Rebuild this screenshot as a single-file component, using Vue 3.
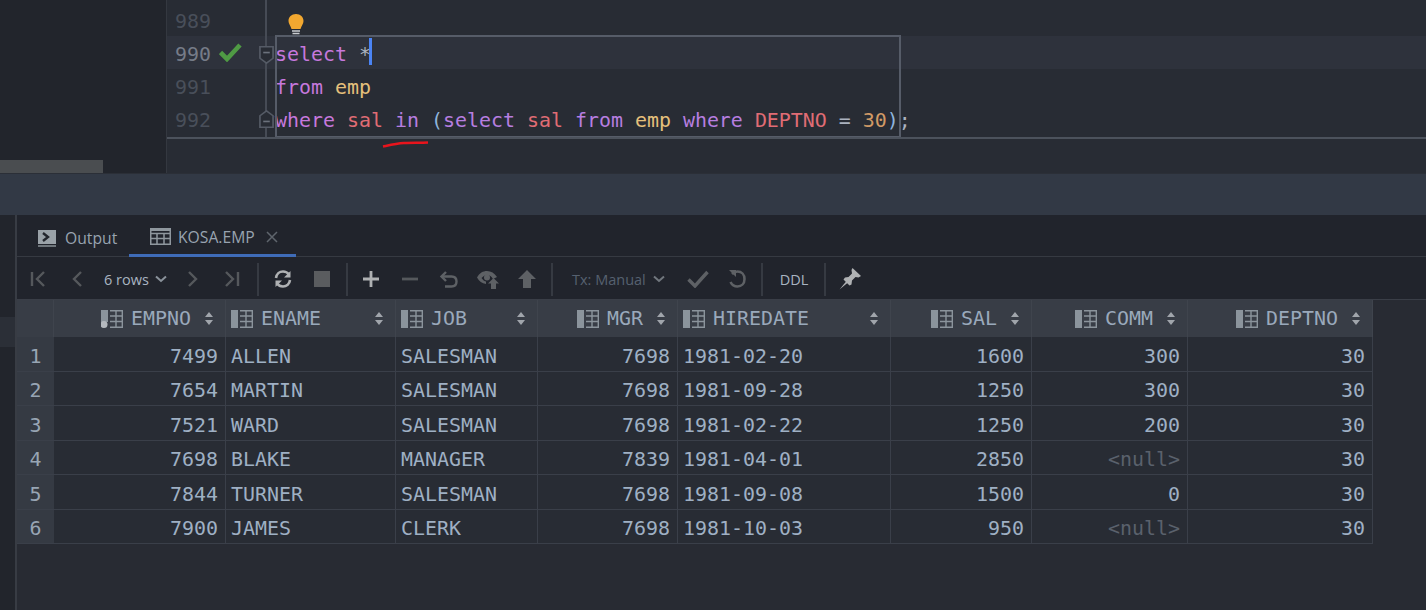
<script setup>
const columns = [
  { name: 'EMPNO', align: 'right', key: true },
  { name: 'ENAME', align: 'left' },
  { name: 'JOB', align: 'left' },
  { name: 'MGR', align: 'right' },
  { name: 'HIREDATE', align: 'left' },
  { name: 'SAL', align: 'right' },
  { name: 'COMM', align: 'right' },
  { name: 'DEPTNO', align: 'right' },
]
const rows = [
  ['7499', 'ALLEN', 'SALESMAN', '7698', '1981-02-20', '1600', '300', '30'],
  ['7654', 'MARTIN', 'SALESMAN', '7698', '1981-09-28', '1250', '300', '30'],
  ['7521', 'WARD', 'SALESMAN', '7698', '1981-02-22', '1250', '200', '30'],
  ['7698', 'BLAKE', 'MANAGER', '7839', '1981-04-01', '2850', '<null>', '30'],
  ['7844', 'TURNER', 'SALESMAN', '7698', '1981-09-08', '1500', '0', '30'],
  ['7900', 'JAMES', 'CLERK', '7698', '1981-10-03', '950', '<null>', '30'],
]
</script>

<template>
  <div class="app">
    <section class="top">
      <aside class="project">
        <div class="hscroll"></div>
      </aside>
      <div class="editor">
        <div class="line"><span class="num">989</span><span class="mark"></span><span class="fold"></span></div>
        <div class="line current">
          <span class="num cur">990</span>
          <span class="mark">
            <svg width="24" height="20" viewBox="0 0 24 20"><path d="M1.5 10.5 L8 17 L21 3" fill="none" stroke="#4f9a44" stroke-width="4.600"/></svg>
          </span>
          <span class="fold"></span>
          <code class="code"><span class="kw">select</span> <span class="op">*</span><span class="caret"></span></code>
        </div>
        <div class="line"><span class="num">991</span><span class="mark"></span><span class="fold"></span>
          <code class="code"><span class="kw">from</span> <span class="tb">emp</span></code>
        </div>
        <div class="line"><span class="num">992</span><span class="mark"></span><span class="fold"></span>
          <code class="code"><span class="kw">where</span> <span class="col">sal</span> <span class="kw2">in</span> <span class="par">(</span><span class="kw2">select</span> <span class="col">sal</span> <span class="kw2">from</span> <span class="tb">emp</span> <span class="kw2">where</span> <span class="col">DEPTNO</span> <span class="op">=</span> <span class="nm">30</span><span class="par">)</span><span class="op">;</span></code>
        </div>
        <div class="foldline"></div>
        <svg class="foldmark fm1" width="15" height="18" viewBox="0 0 16 22" preserveAspectRatio="none"><path d="M1 1 H15 V15 L8 21 L1 15 Z" fill="#282c34" stroke="#555b66" stroke-width="1.8"/><path d="M4.5 8 H11.5" stroke="#6b717c" stroke-width="2"/></svg>
        <svg class="foldmark fm2" width="15" height="18" viewBox="0 0 16 22" preserveAspectRatio="none"><path d="M1 21 H15 V7 L8 1 L1 7 Z" fill="#282c34" stroke="#555b66" stroke-width="1.8"/><path d="M4.5 14 H11.5" stroke="#6b717c" stroke-width="2"/></svg>
        <svg class="bulb" width="18" height="24" viewBox="0 0 18 24">
          <path d="M9 1 C4.5 1 1.5 4 1.5 8 C1.5 11 3.5 12.500 4.500 16 H13.500 C14.500 12.500 16.500 11 16.500 8 C16.500 4 13.500 1 9 1 Z" fill="#f2a830"/>
          <path d="M5 18 H13 M5.500 20.500 H12.500 M7 23 H11" stroke="#c9ccd0" stroke-width="1.400"/>
        </svg>
        <div class="selection"></div>
        <svg class="scribble" width="48" height="8" viewBox="0 0 48 8"><path d="M1 6.500 C8 5 14 3.500 22 3 C30 2.500 38 3 46 2.500" fill="none" stroke="#e8141c" stroke-width="2.500"/></svg>
        <div class="rule"></div>
      </div>
    </section>

    <div class="band"></div>

    <section class="bottom">
      <aside class="rail"><div class="rail-mark"></div></aside>
      <div class="results">
        <nav class="tabs">
          <div class="tab tab-output">
            <svg width="18" height="17" viewBox="0 0 18 17"><rect width="18" height="14" fill="#9aa2a8"/><rect y="15" width="18" height="2" fill="#6f767c"/><path d="M5 3 L10 7 L5 11" fill="none" stroke="#23262d" stroke-width="2.400"/></svg>
            <span>Output</span>
          </div>
          <div class="tab tab-active">
            <svg width="21" height="17" viewBox="0 0 21 17"><path d="M.75.75 H20.250 V16.250 H.75 Z M1 5.500 H20 M1 10.500 H20 M7 5 V16 M14 5 V16" fill="none" stroke="#8f979e" stroke-width="1.500"/><rect width="21" height="3" fill="#8f979e"/></svg>
            <span>KOSA.EMP</span>
            <svg class="close" width="12" height="12" viewBox="0 0 12 12"><path d="M1 1 L11 11 M11 1 L1 11" stroke="#5f656d" stroke-width="1.500"/></svg>
          </div>
        </nav>

        <div class="toolbar">
          <svg width="16" height="16" viewBox="0 0 16 16"><path d="M2 1 V15 M14 1 L7 8 L14 15" fill="none" stroke="#55585c" stroke-width="2.400"/></svg>
          <svg width="12" height="16" viewBox="0 0 12 16"><path d="M10 1 L3 8 L10 15" fill="none" stroke="#55585c" stroke-width="2.400"/></svg>
          <span class="rows-label">6 rows</span>
          <svg width="12" height="8" viewBox="0 0 12 8"><path d="M1 1.500 L6 6 L11 1.500" fill="none" stroke="#8a929b" stroke-width="2"/></svg>
          <svg width="12" height="16" viewBox="0 0 12 16"><path d="M2 1 L9 8 L2 15" fill="none" stroke="#55585c" stroke-width="2.400"/></svg>
          <svg width="16" height="16" viewBox="0 0 16 16"><path d="M14 1 V15 M2 1 L9 8 L2 15" fill="none" stroke="#55585c" stroke-width="2.400"/></svg>
          <i class="sep"></i>
          <svg width="20" height="20" viewBox="0 0 20 20"><path d="M3 9 C3.500 5 6.500 2.500 10 2.500 C12.500 2.500 14.500 3.500 16 5.500" fill="none" stroke="#afb1b3" stroke-width="2.600"/><path d="M17.500 2 V8.500 H11 Z" fill="#afb1b3"/><path d="M17 11 C16.500 15 13.500 17.500 10 17.500 C7.500 17.500 5.500 16.500 4 14.500" fill="none" stroke="#afb1b3" stroke-width="2.600"/><path d="M2.500 18 V11.500 H9 Z" fill="#afb1b3"/></svg>
          <span class="stop"></span>
          <i class="sep"></i>
          <svg width="16" height="16" viewBox="0 0 16 16"><path d="M8 0 V16 M0 8 H16" stroke="#afb1b3" stroke-width="2.800"/></svg>
          <svg width="16" height="16" viewBox="0 0 16 16"><path d="M0 8 H16" stroke="#55585c" stroke-width="2.800"/></svg>
          <svg width="20" height="20" viewBox="0 0 20 20"><path d="M7 3 L2.500 7.500 L7 12" fill="none" stroke="#5e6165" stroke-width="2.400"/><path d="M3 7.500 H12.500 C15.500 7.500 17.500 9.500 17.500 12.500 C17.500 15.500 15.500 17.500 12.500 17.500 H6" fill="none" stroke="#5e6165" stroke-width="2.400"/></svg>
          <svg width="24" height="22" viewBox="0 0 24 22"><path d="M1 9.500 C3.500 5 7 3 11 3 C15 3 18.500 5 21 9 L17 11 C15.500 8.500 13.500 7 11 7 C8.500 7 7 8.500 5.500 10 C6.500 11.500 8 13 10 13.500 L10 16 C6 15.500 3 13 1 9.500 Z" fill="#5e6165"/><circle cx="11" cy="9.500" r="3" fill="#5e6165"/><path d="M17.500 10 L23 15.500 H20 V21 H15 V15.500 H12 Z" fill="#5e6165"/></svg>
          <svg width="18" height="18" viewBox="0 0 18 18"><path d="M9 0 L18 9 H13 V18 H5 V9 H0 Z" fill="#5e6165"/></svg>
          <i class="sep"></i>
          <span class="tx-label">Tx: Manual</span>
          <svg width="12" height="8" viewBox="0 0 12 8"><path d="M1 1.500 L6 6 L11 1.500" fill="none" stroke="#71777e" stroke-width="2"/></svg>
          <svg width="22" height="18" viewBox="0 0 22 18"><path d="M1.500 9.500 L8 16 L20.500 2" fill="none" stroke="#5e6165" stroke-width="3.400"/></svg>
          <svg width="20" height="20" viewBox="0 0 20 20"><path d="M5 5 C6.500 3.500 8 2.500 10.500 2.500 C14.500 2.500 17.500 5.500 17.500 10 C17.500 14.500 14.500 17.500 10.500 17.500 C7.500 17.500 5 16 3.500 13" fill="none" stroke="#5e6165" stroke-width="2.600"/><path d="M2 1 H9 V8 Z" fill="#5e6165"/></svg>
          <i class="sep"></i>
          <span class="ddl">DDL</span>
          <i class="sep"></i>
          <svg width="22" height="22" viewBox="0 0 22 22"><path d="M13.500 0 L22 8 L19.500 9.500 L16.500 9 L13 12.500 L12.500 16.500 L10.500 17.500 L4.500 11.500 L6 9.500 L9.500 9 L13 5.500 L12.500 2 Z" fill="#b0b2b4"/><path d="M7.500 13 L9 14.500 L.5 21.500 Z" fill="#b0b2b4"/></svg>
        </div>

        <div class="table-wrap">
          <div class="grid">
            <div class="hcell corner"></div>
            <div v-for="c in columns" :key="c.name" class="hcell" :class="c.align">
              <svg class="colicon" width="22" height="18" viewBox="0 0 22 18">
                <rect v-if="!c.key" x="0" y="0" width="7" height="18" fill="#8b949c"/>
                <rect v-else x="0" y="0" width="7" height="12" fill="#8b949c"/>
                <circle v-if="c.key" cx="3" cy="14.500" r="3.500" fill="#b4b9be"/>
                <path d="M9 .7 H21.300 V17.300 H9 M9 6 H21 M9 11.500 H21 M15 1 V17" fill="none" stroke="#8b949c" stroke-width="1.400"/>
              </svg>
              <span class="hname">{{ c.name }}</span>
              <svg class="sort" width="8" height="13" viewBox="0 0 10 13" preserveAspectRatio="none"><path d="M5 0 L10 5 H0 Z M5 13 L0 8 H10 Z" fill="#a0a5ab"/></svg>
            </div>
            <template v-for="(row, i) in rows" :key="i">
              <div class="rownum">{{ i + 1 }}</div>
              <div v-for="(v, j) in row" :key="j" class="cell" :class="[columns[j].align, { nul: v === '<null>' }]">{{ v }}</div>
            </template>
          </div>
        </div>
      </div>
    </section>
  </div>
</template>

<style>
html, body { margin: 0; background: #282b33; }
</style>

<style scoped>
.app { width: 1426px; height: 610px; display: flex; flex-direction: column; overflow: hidden; background: #282b33; }
.top { height: 174px; display: flex; flex: none; border-bottom: 1px solid #2b2f37; box-sizing: border-box; }
.project { width: 166px; flex: none; background: #22252c; position: relative; border-right: 1px solid #343840; }
.hscroll { position: absolute; left: 0; bottom: 0; width: 103px; height: 13px; background: #4a4d50; }
.editor { flex: 1; position: relative; background: #282c34; padding-top: 3px; }
.line { display: flex; align-items: center; height: 33px; font-family: "DejaVu Sans Mono", monospace; font-size: 19.93px; }
.current { background: #2e323c; }
.num { width: 41px; margin-left: 8px; flex: none; color: #494f5a; padding-top: 4px; }
.num.cur { color: #767c88; }
.mark { width: 30px; margin-left: 3px; flex: none; display: flex; align-items: center; margin-top: -2px; }
.fold { width: 26px; flex: none; }
.code { font: inherit; white-space: pre; position: relative; color: #abb2bf; padding-top: 4px; }
.kw { color: #c678dd; }
.kw2 { color: #b77ee0; }
.col { color: #e06c75; }
.tb { color: #e5c07b; }
.nm { color: #d19a66; }
.op { color: #abb2bf; }
.par { color: #8fb4dc; }
.caret { position: absolute; left: 94px; top: -1px; width: 3px; height: 27px; background: #4b84f4; }
.foldline { position: absolute; left: 98px; top: 0; width: 2px; height: 137px; background: #464b55; }
.foldmark { position: absolute; left: 92px; }
.fm1 { top: 46px; }
.fm2 { top: 110px; }
.bulb { position: absolute; left: 120px; top: 13px; }
.selection { position: absolute; left: 108px; top: 35px; width: 622px; height: 99px; border: 2px solid #565c68; pointer-events: none; }
.scribble { position: absolute; left: 215px; top: 140px; }
.rule { position: absolute; left: 0; right: 0; top: 137px; height: 2px; background: #4c525c; }
.band { height: 41px; flex: none; background: #323945; }
.bottom { flex: 1; display: flex; min-height: 0; }
.rail { width: 15px; flex: none; background: #22252c; border-right: 2px solid #383c44; position: relative; }
.rail-mark { position: absolute; left: 0; right: 0; top: 102px; height: 30px; background: #2b2f37; }
.results { flex: 1; display: flex; flex-direction: column; min-width: 0; }
.tabs { height: 42px; flex: none; box-sizing: border-box; display: flex; background: #21242c; border-bottom: 1px solid #363a42; font-family: "Open Sans", "Noto Sans", sans-serif; font-size: 15.7px; color: #98a3b0; }
.tab { display: flex; align-items: center; gap: 9px; box-sizing: border-box; height: 42px; padding-top: 4px; }
.tab-output { margin-left: 21px; width: 91px; }
.tab-active { width: 167px; padding-left: 21px; gap: 7px; border-bottom: 3px solid #3f6cb8; }
.close { margin-left: 4px; }
.toolbar { height: 43px; flex: none; box-sizing: border-box; padding: 2px 0 0 1px; display: grid; grid-template-columns: 39px 39px 56px 18px 46px 32px 20px 30px 48px 2px 46px 32px 46px 32px 46px 4px 96px 18px 60px 18px 32px 32px 30px 20px; align-items: center; justify-items: center; background: #21242c; border-bottom: 1px solid #3a3e47; font-family: "Open Sans", "Noto Sans", sans-serif; font-size: 14.5px; }
.sep { display: block; width: 2px; height: 33px; background: #363a42; }
.stop { display: block; width: 16px; height: 16px; background: #5a5c5f; }
.rows-label { justify-self: start; padding-left: 8px; color: #a9b4c1; white-space: nowrap; }
.tx-label { justify-self: start; padding-left: 18px; color: #566170; white-space: nowrap; }
.ddl { color: #a9b4c1; }
.table-wrap { flex: 1; background: #282b33; }
.grid { display: grid; width: 1356px; grid-template-columns: 37px 172px 170px 142px 140px 213px 141px 156px 185px; grid-template-rows: 37px 35px 34px 35px 34px 35px 34px; font-family: "DejaVu Sans Mono", monospace; font-size: 19.93px; color: #9fb0c4; }
.hcell { display: flex; align-items: center; background: #383d46; padding: 0 34px 0 5px; position: relative; box-sizing: border-box; border-right: 1px solid #3f444d; gap: 8px; }
.hcell.right { justify-content: flex-end; }
.hcell.left { justify-content: flex-start; }
.corner { padding: 0; }
.hname { color: #9aa9bb; line-height: 1; }
.sort { position: absolute; right: 12px; top: 12px; }
.colicon { flex: none; }
.rownum { background: #353a43; display: flex; align-items: center; justify-content: center; color: #98a5b4; padding-top: 4px; }
.rownum, .cell { border-bottom: 1px solid #3a3f49; box-sizing: border-box; }
.cell { background: #282c34; display: flex; align-items: center; padding: 4px 7px 0 5px; border-right: 1px solid #3a3f49; white-space: pre; }
.cell.right { justify-content: flex-end; }
.nul { color: #5a616c; }
</style>
